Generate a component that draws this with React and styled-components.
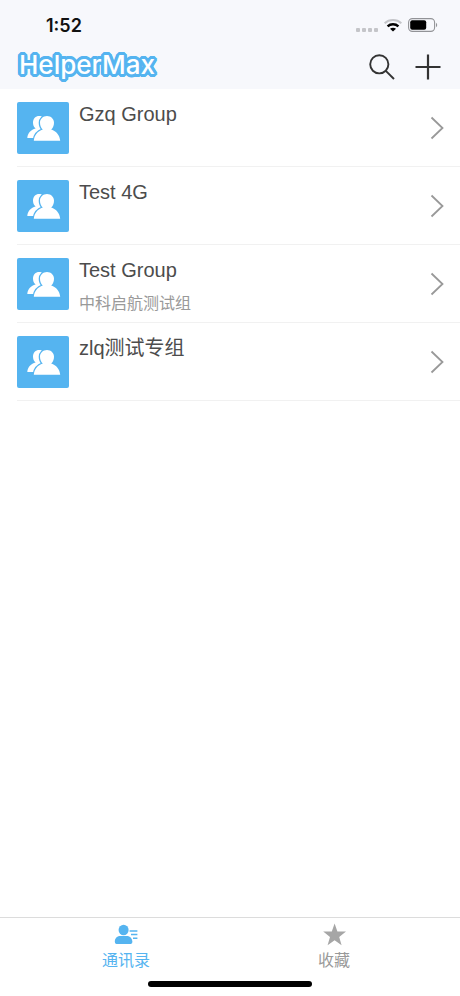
import { useState } from 'react'
import styled, { createGlobalStyle } from 'styled-components'

const primaryColor = '#55b4f0'
const mutedColor = '#999'

const GlobalStyle = createGlobalStyle`
    body {
        margin: 0;
        background-color: #fff;
        font-family: "Liberation Sans", "Noto Sans CJK SC", sans-serif;
    }

    button {
        padding: 0;
        border: none;
        background: none;
        font-family: inherit;
        cursor: pointer;
    }

    svg {
        display: block;
    }
`

const Screen = styled.div`
    display: flex;
    flex-direction: column;
    min-height: 100vh;
`

const Header = styled.header`
    background-color: #f7f8fc;
    padding-bottom: 4px;
`

const StatusBar = styled.div`
    display: flex;
    justify-content: space-between;
    align-items: center;
    height: 44px;
    padding: 6px 22px 0 46px;
    box-sizing: border-box;
`

const Clock = styled.time`
    padding-top: 2px;
    font-family: Inter, sans-serif;
    font-size: 18px;
    line-height: 20px;
    font-weight: 600;
    color: #111;
`

const StatusIcons = styled.div`
    display: flex;
    align-items: center;
    gap: 6px;
`

const NavBar = styled.div`
    display: flex;
    justify-content: space-between;
    align-items: center;
    height: 41px;
    padding: 0 19px;
`

const Logo = styled.h1`
    margin: 0;
    font-family: Inter, sans-serif;
    font-size: 26px;
    line-height: 30px;
    font-weight: 500;
    color: #fff;
    text-shadow:
        3px 0 ${primaryColor}, -3px 0 ${primaryColor},
        0 3px ${primaryColor}, 0 -3px ${primaryColor},
        3px 1px ${primaryColor}, 3px -1px ${primaryColor},
        -3px 1px ${primaryColor}, -3px -1px ${primaryColor},
        1px 3px ${primaryColor}, -1px 3px ${primaryColor},
        1px -3px ${primaryColor}, -1px -3px ${primaryColor},
        2px 2px ${primaryColor}, -2px 2px ${primaryColor},
        2px -2px ${primaryColor}, -2px -2px ${primaryColor},
        1px 1px ${primaryColor}, -1px 1px ${primaryColor},
        1px -1px ${primaryColor}, -1px -1px ${primaryColor};
`

const Actions = styled.div`
    display: flex;
    gap: 20px;
    padding-top: 4px;
`

const GroupList = styled.ul`
    flex: 1;
    margin: 0;
    padding: 0 0 0 17px;
    list-style: none;
`

const GroupRow = styled.button`
    display: flex;
    width: 100%;
    height: 78px;
    padding: 13px 16px 0 0;
    box-sizing: border-box;
    border-bottom: 1px solid #f1f1f1;
    text-align: left;
`

const Avatar = styled.span`
    width: 52px;
    height: 52px;
    border-radius: 2px;
    background-color: ${primaryColor};
`

const GroupText = styled.span`
    display: flex;
    flex-direction: column;
    flex: 1;
    gap: 12px;
    padding-left: 10px;
`

const GroupName = styled.span`
    font-size: 20px;
    line-height: 24px;
    color: #4c4c4c;
`

const GroupNote = styled.span`
    font-size: 16px;
    line-height: 20px;
    color: ${mutedColor};
`

const Chevron = styled.span`
    align-self: flex-start;
    padding-top: 14px;
`

const Footer = styled.footer`
    border-top: 1px solid #dcdcdc;
`

const TabBar = styled.nav`
    display: flex;
    padding: 5px 22px 0;
`

const Tab = styled.button`
    display: flex;
    flex: 1;
    flex-direction: column;
    align-items: center;
    gap: 2px;
    font-size: 16px;
    line-height: 24px;
    color: ${({ $active }) => ($active ? primaryColor : mutedColor)};
`

const HomeIndicator = styled.div`
    width: 164px;
    height: 6px;
    margin: 8px auto 9px;
    border-radius: 3px;
    background-color: #000;
`

const groups = [
    { name: 'Gzq Group' },
    { name: 'Test 4G' },
    { name: 'Test Group', note: '中科启航测试组' },
    { name: 'zlq测试专组' }
]

function SignalIcon(){
    return(
        <svg width="22" height="16" viewBox="0 0 22 16" fill="#c4c5c9">
            <rect x="0" y="11" width="4" height="4" rx="1" />
            <rect x="6" y="11" width="4" height="4" rx="1" />
            <rect x="12" y="11" width="4" height="4" rx="1" />
            <rect x="18" y="11" width="4" height="4" rx="1" />
        </svg>
    )
}

function WifiIcon(){
    return(
        <svg width="18" height="14" viewBox="0 0 18 14" fill="none" strokeWidth="2.4">
            <path d="M.6 5.2C5.2 1 12.8 1 17.4 5.2" stroke="#c4c5c9" strokeWidth="2" />
            <path d="M3.6 8.4C6.6 5.6 11.4 5.6 14.4 8.4" stroke="#000" />
            <path d="M9 13.6L6 10.8C7.8 9.3 10.2 9.3 12 10.8Z" fill="#000" />
        </svg>
    )
}

function BatteryIcon(){
    return(
        <svg width="30" height="14" viewBox="0 0 30 14">
            <rect x=".6" y=".6" width="26" height="12.8" rx="3.8" fill="none" stroke="#929397" strokeWidth="1.1" />
            <rect x="2.2" y="2.2" width="16" height="9.6" rx="2" fill="#000" />
            <path d="M28 4.8C29.6 5.6 29.6 8.4 28 9.2Z" fill="#929397" />
        </svg>
    )
}

function SearchIcon(){
    return(
        <svg width="26" height="26" viewBox="0 0 26 26" fill="none" stroke="#333" strokeWidth="1.9">
            <circle cx="10.3" cy="10.3" r="9.1" />
            <path d="M16.8 16.8L25 25" />
        </svg>
    )
}

function PlusIcon(){
    return(
        <svg width="26" height="26" viewBox="0 0 26 26" fill="none" stroke="#333" strokeWidth="2.2">
            <path d="M13 .5V25.5M.5 13H25.5" />
        </svg>
    )
}

function GroupIcon(){
    return(
        <svg width="52" height="52" viewBox="0 0 52 52" fill="#fff">
            <path d="M10.3 36C10.8 31 14 28 18.6 26.6C16.8 25.2 16 23 16 20.6C16 16.6 18.6 14 22.2 14C25.8 14 28 16.6 28 20.6V36Z" />
            <path
                d="M16.8 38.8C17.3 33.2 20.6 29.4 25.8 27.6C24 26 23 23.6 23 20.8C23 16.8 26 14 30 14C34 14 37 16.8 37 20.8C37 23.6 36 26 34.2 27.6C39.4 29.4 42.7 33.2 43.2 38.8Z"
                stroke={primaryColor}
                strokeWidth="2.6"
                paintOrder="stroke"
            />
        </svg>
    )
}

function ChevronIcon(){
    return(
        <svg width="14" height="24" viewBox="0 0 14 24" fill="none" stroke="#999" strokeWidth="1.8">
            <path d="M1.5 1.5L12.5 12L1.5 22.5" />
        </svg>
    )
}

function ContactsIcon(){
    return(
        <svg width="24" height="24" viewBox="0 0 24 24" fill="currentColor">
            <ellipse cx="9.6" cy="7" rx="5" ry="5.2" />
            <path d="M.8 18.6C1 14.8 3.4 13 6.6 13H12.4C15.6 13 18 14.8 18.4 18.6Q18.6 21 16.8 21H2.4Q.6 21 .8 18.6Z" />
            <path d="M15.6 8H23.4M17 11.6H23.4M19 15.2H23.4" fill="none" stroke="currentColor" strokeWidth="1.5" />
        </svg>
    )
}

function StarIcon(){
    return(
        <svg width="24" height="24" viewBox="0 0 24 24" fill="#a6a6a6">
            <path d="M12.6 .6L15.4 8.6H24L17.2 13.9L19.6 22.2L12.6 17.2L5.6 22.2L8 13.9L1.2 8.6H9.8Z" />
        </svg>
    )
}

function App(){
    const [activeTab, setActiveTab] = useState('contacts')

    return(
        <Screen>
            <GlobalStyle />
            <Header>
                <StatusBar>
                    <Clock>1:52</Clock>
                    <StatusIcons>
                        <SignalIcon />
                        <WifiIcon />
                        <BatteryIcon />
                    </StatusIcons>
                </StatusBar>
                <NavBar>
                    <Logo>HelperMax</Logo>
                    <Actions>
                        <button aria-label="Search"><SearchIcon /></button>
                        <button aria-label="Add"><PlusIcon /></button>
                    </Actions>
                </NavBar>
            </Header>
            <GroupList>
                {groups.map(({ name, note }) => (
                    <li key={name}>
                        <GroupRow>
                            <Avatar><GroupIcon /></Avatar>
                            <GroupText>
                                <GroupName>{name}</GroupName>
                                {note && <GroupNote>{note}</GroupNote>}
                            </GroupText>
                            <Chevron><ChevronIcon /></Chevron>
                        </GroupRow>
                    </li>
                ))}
            </GroupList>
            <Footer>
                <TabBar>
                    <Tab $active={activeTab === 'contacts'} onClick={() => setActiveTab('contacts')}>
                        <ContactsIcon />
                        通讯录
                    </Tab>
                    <Tab $active={activeTab === 'favorites'} onClick={() => setActiveTab('favorites')}>
                        <StarIcon />
                        收藏
                    </Tab>
                </TabBar>
                <HomeIndicator />
            </Footer>
        </Screen>
    )
}

export default App
